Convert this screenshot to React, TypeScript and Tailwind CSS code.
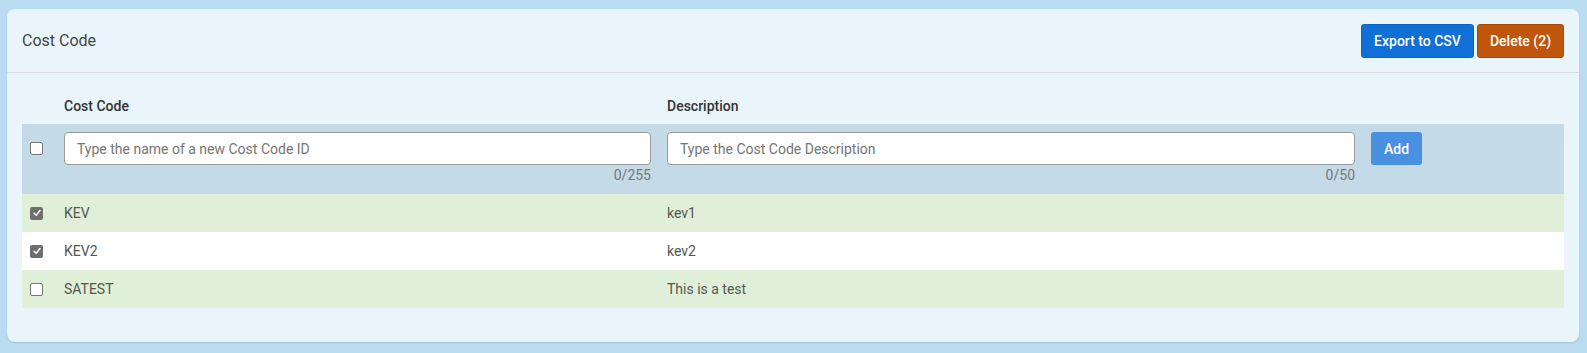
import { useState } from 'react'

type Row = {
  id: string
  code: string
  description: string
}

const rows: Row[] = [
  { id: '1', code: 'KEV', description: 'kev1' },
  { id: '2', code: 'KEV2', description: 'kev2' },
  { id: '3', code: 'SATEST', description: 'This is a test' },
]

function Check({ checked, onClick }: { checked: boolean; onClick?: () => void }) {
  return (
    <button
      type="button"
      onClick={onClick}
      className={
        checked
          ? 'flex h-[13px] w-[13px] items-center justify-center rounded-[2px] bg-[#6f6f6f]'
          : 'flex h-[13px] w-[13px] items-center justify-center rounded-[2px] border border-[#767676] bg-white'
      }
    >
      {checked && (
        <svg viewBox="0 0 12 12" className="h-[10px] w-[10px]">
          <path d="M2.5 6.4 L5 8.8 L9.6 3" fill="none" stroke="white" strokeWidth="1.8" strokeLinecap="round" strokeLinejoin="round" />
        </svg>
      )}
    </button>
  )
}

export default function App() {
  const [selected, setSelected] = useState<string[]>(['1', '2'])
  const [allChecked, setAllChecked] = useState(false)
  const [code, setCode] = useState('')
  const [desc, setDesc] = useState('')

  function toggle(id: string) {
    setSelected((prev) => (prev.includes(id) ? prev.filter((x) => x !== id) : [...prev, id]))
  }

  return (
    <div className="min-h-screen bg-[#b9dcf1] pb-[11px] pl-[7px] pr-[8px] pt-[9px] font-['Roboto','Liberation_Sans',sans-serif]">
      <div className="rounded-lg bg-[#e9f4fb] shadow-[0_1px_2px_rgba(0,0,0,0.12)]">
        <div className="flex h-[64px] items-center justify-between border-b border-[#d9dcde] px-[15px]">
          <h1 className="text-base text-[#444]">Cost Code</h1>
          <div className="flex gap-[3px]">
            <button className="h-[34px] w-[113px] rounded-[3px] border border-[#0f63c4] bg-[#1170d8] text-sm font-medium text-white">
              Export to CSV
            </button>
            <button className="h-[34px] w-[87px] rounded-[3px] border border-[#a64a0a] bg-[#c0560c] text-sm font-medium text-white">
              Delete ({selected.length})
            </button>
          </div>
        </div>

        <div className="px-[15px] pb-[34px]">
          <div className="flex h-[51px] items-end pb-[8px] text-sm font-medium leading-5 text-[#333]">
            <div className="w-[42px]" />
            <div className="w-[603px]">Cost Code</div>
            <div className="w-[704px]">Description</div>
          </div>

          <div className="flex h-[70px] items-start bg-[#c4dae7] pt-[8px]">
            <div className="flex h-[33px] w-[42px] items-center pl-[8px]">
              <Check checked={allChecked} onClick={() => setAllChecked(!allChecked)} />
            </div>
            <div className="w-[603px] pr-[16px]">
              <input
                className="h-[33px] w-full rounded-[4px] border border-[#9a9a9a] bg-white px-[12px] text-sm text-[#333] outline-none placeholder:text-[#757575]"
                placeholder="Type the name of a new Cost Code ID"
                value={code}
                onChange={(e) => setCode(e.target.value)}
              />
              <p className="text-right text-sm leading-5 text-[#777]">{code.length}/255</p>
            </div>
            <div className="w-[704px] pr-[16px]">
              <input
                className="h-[33px] w-full rounded-[4px] border border-[#9a9a9a] bg-white px-[12px] text-sm text-[#333] outline-none placeholder:text-[#757575]"
                placeholder="Type the Cost Code Description"
                value={desc}
                onChange={(e) => setDesc(e.target.value)}
              />
              <p className="text-right text-sm leading-5 text-[#777]">{desc.length}/50</p>
            </div>
            <button className="h-[33px] w-[51px] rounded-[3px] bg-[#4a90e0] text-sm font-medium text-white">
              Add
            </button>
          </div>

          {rows.map((row, i) => (
            <div
              key={row.id}
              className={
                i % 2 === 0
                  ? 'flex h-[38px] items-center bg-[#e0f0d8] text-sm text-[#555]'
                  : 'flex h-[38px] items-center bg-white text-sm text-[#555]'
              }
            >
              <div className="flex w-[42px] items-center pl-[8px]">
                <Check checked={selected.includes(row.id)} onClick={() => toggle(row.id)} />
              </div>
              <div className="w-[603px]">{row.code}</div>
              <div className="w-[704px]">{row.description}</div>
            </div>
          ))}
        </div>
      </div>
    </div>
  )
}
